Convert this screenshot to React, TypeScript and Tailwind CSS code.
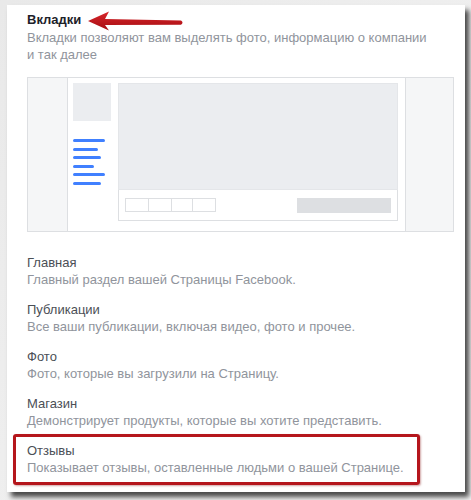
import React from "react";

const items = [
  { t: "Главная", d: "Главный раздел вашей Страницы Facebook." },
  { t: "Публикации", d: "Все ваши публикации, включая видео, фото и прочее." },
  { t: "Фото", d: "Фото, которые вы загрузили на Страницу." },
  { t: "Магазин", d: "Демонстрирует продукты, которые вы хотите представить." },
  { t: "Отзывы", d: "Показывает отзывы, оставленные людьми о вашей Странице.", hl: true },
];

const lineWidths = [32, 25, 28, 21, 32, 28];

export default function App() {
  return (
    <div
      className="relative w-[471px] h-[500px] overflow-hidden bg-gradient-to-br from-[#e9e9e9] to-[#f4f4f4]"
      style={{ fontFamily: '"Liberation Sans", Arial, sans-serif' }}
    >
      <div className="absolute left-[7px] top-[5px] w-[458px] h-[487px] bg-white shadow-[4px_5px_5px_rgba(0,0,0,0.7)] pt-[7px] px-[20px]">
        <h3 className="text-[13px] leading-[16px] font-bold text-[#1d2129]">Вкладки</h3>
        <p className="mt-[1px] text-[13px] leading-[17px] text-[#90949c]">
          Вкладки позволяют вам выделять фото, информацию о компании
          <br />и так далее
        </p>

        {/* illustration */}
        <div className="mt-[14px] w-[427px] h-[155px] border border-[#dddfe2] flex">
          <div className="w-[40px] bg-[#f5f6f7] border-r border-[#dddfe2]" />
          <div className="flex-1 flex pt-[5px] pl-[5px] gap-[7px]">
            <div className="w-[38px] flex flex-col">
              <div className="w-[38px] h-[38px] bg-[#ebedf0]" />
              <div className="mt-[18px] flex flex-col gap-[5.6px]">
                {lineWidths.map((w, i) => (
                  <div key={i} className="h-[3px] rounded-full bg-[#4080ff]" style={{ width: w }} />
                ))}
              </div>
            </div>
            <div className="w-[280px] flex flex-col">
              <div className="h-[107px] bg-[#ebedf0] border border-[#e4e6e9]" />
              <div className="h-[31px] border border-t-0 border-[#dddfe2] flex items-start justify-between pt-[8px] pl-[6px] pr-[6px]">
                <div className="flex">
                  {[24, 24, 22, 24].map((w, i) => (
                    <div key={i} className="h-[14px] border border-[#dddfe2] -ml-px first:ml-0" style={{ width: w }} />
                  ))}
                </div>
                <div className="w-[94px] h-[15px] bg-[#dddfe2]" />
              </div>
            </div>
          </div>
          <div className="w-[48px] bg-[#f5f6f7] border-l border-[#dddfe2]" />
        </div>

        <div className="mt-[22px] flex flex-col gap-[13px]">
          {items.map((it) => (
            <div key={it.t} className="relative">
              <div className="text-[13px] leading-[17px] text-[#4b4f56]">{it.t}</div>
              <div className="text-[13px] leading-[17px] text-[#90949c]">{it.d}</div>
              {it.hl && (
                <div className="absolute -left-[14px] -top-[8px] w-[407px] h-[51px] border-[3px] border-[#b5161c] rounded-[3px] shadow-[1px_1px_2px_rgba(120,0,0,0.35)]" />
              )}
            </div>
          ))}
        </div>
      </div>

      {/* red arrow */}
      <svg className="absolute left-0 top-0" width="200" height="40" viewBox="0 0 200 40">
        <defs>
          <linearGradient id="ag" x1="0" y1="0" x2="0" y2="1">
            <stop offset="0" stopColor="#d9262b" />
            <stop offset="1" stopColor="#a50d12" />
          </linearGradient>
        </defs>
        <path
          d="M88 21 L109 11.5 L105 19 L181 20.5 Q184 22.5 181 24.8 L105 25 L109 30.5 Z"
          fill="url(#ag)"
        />
      </svg>
    </div>
  );
}
